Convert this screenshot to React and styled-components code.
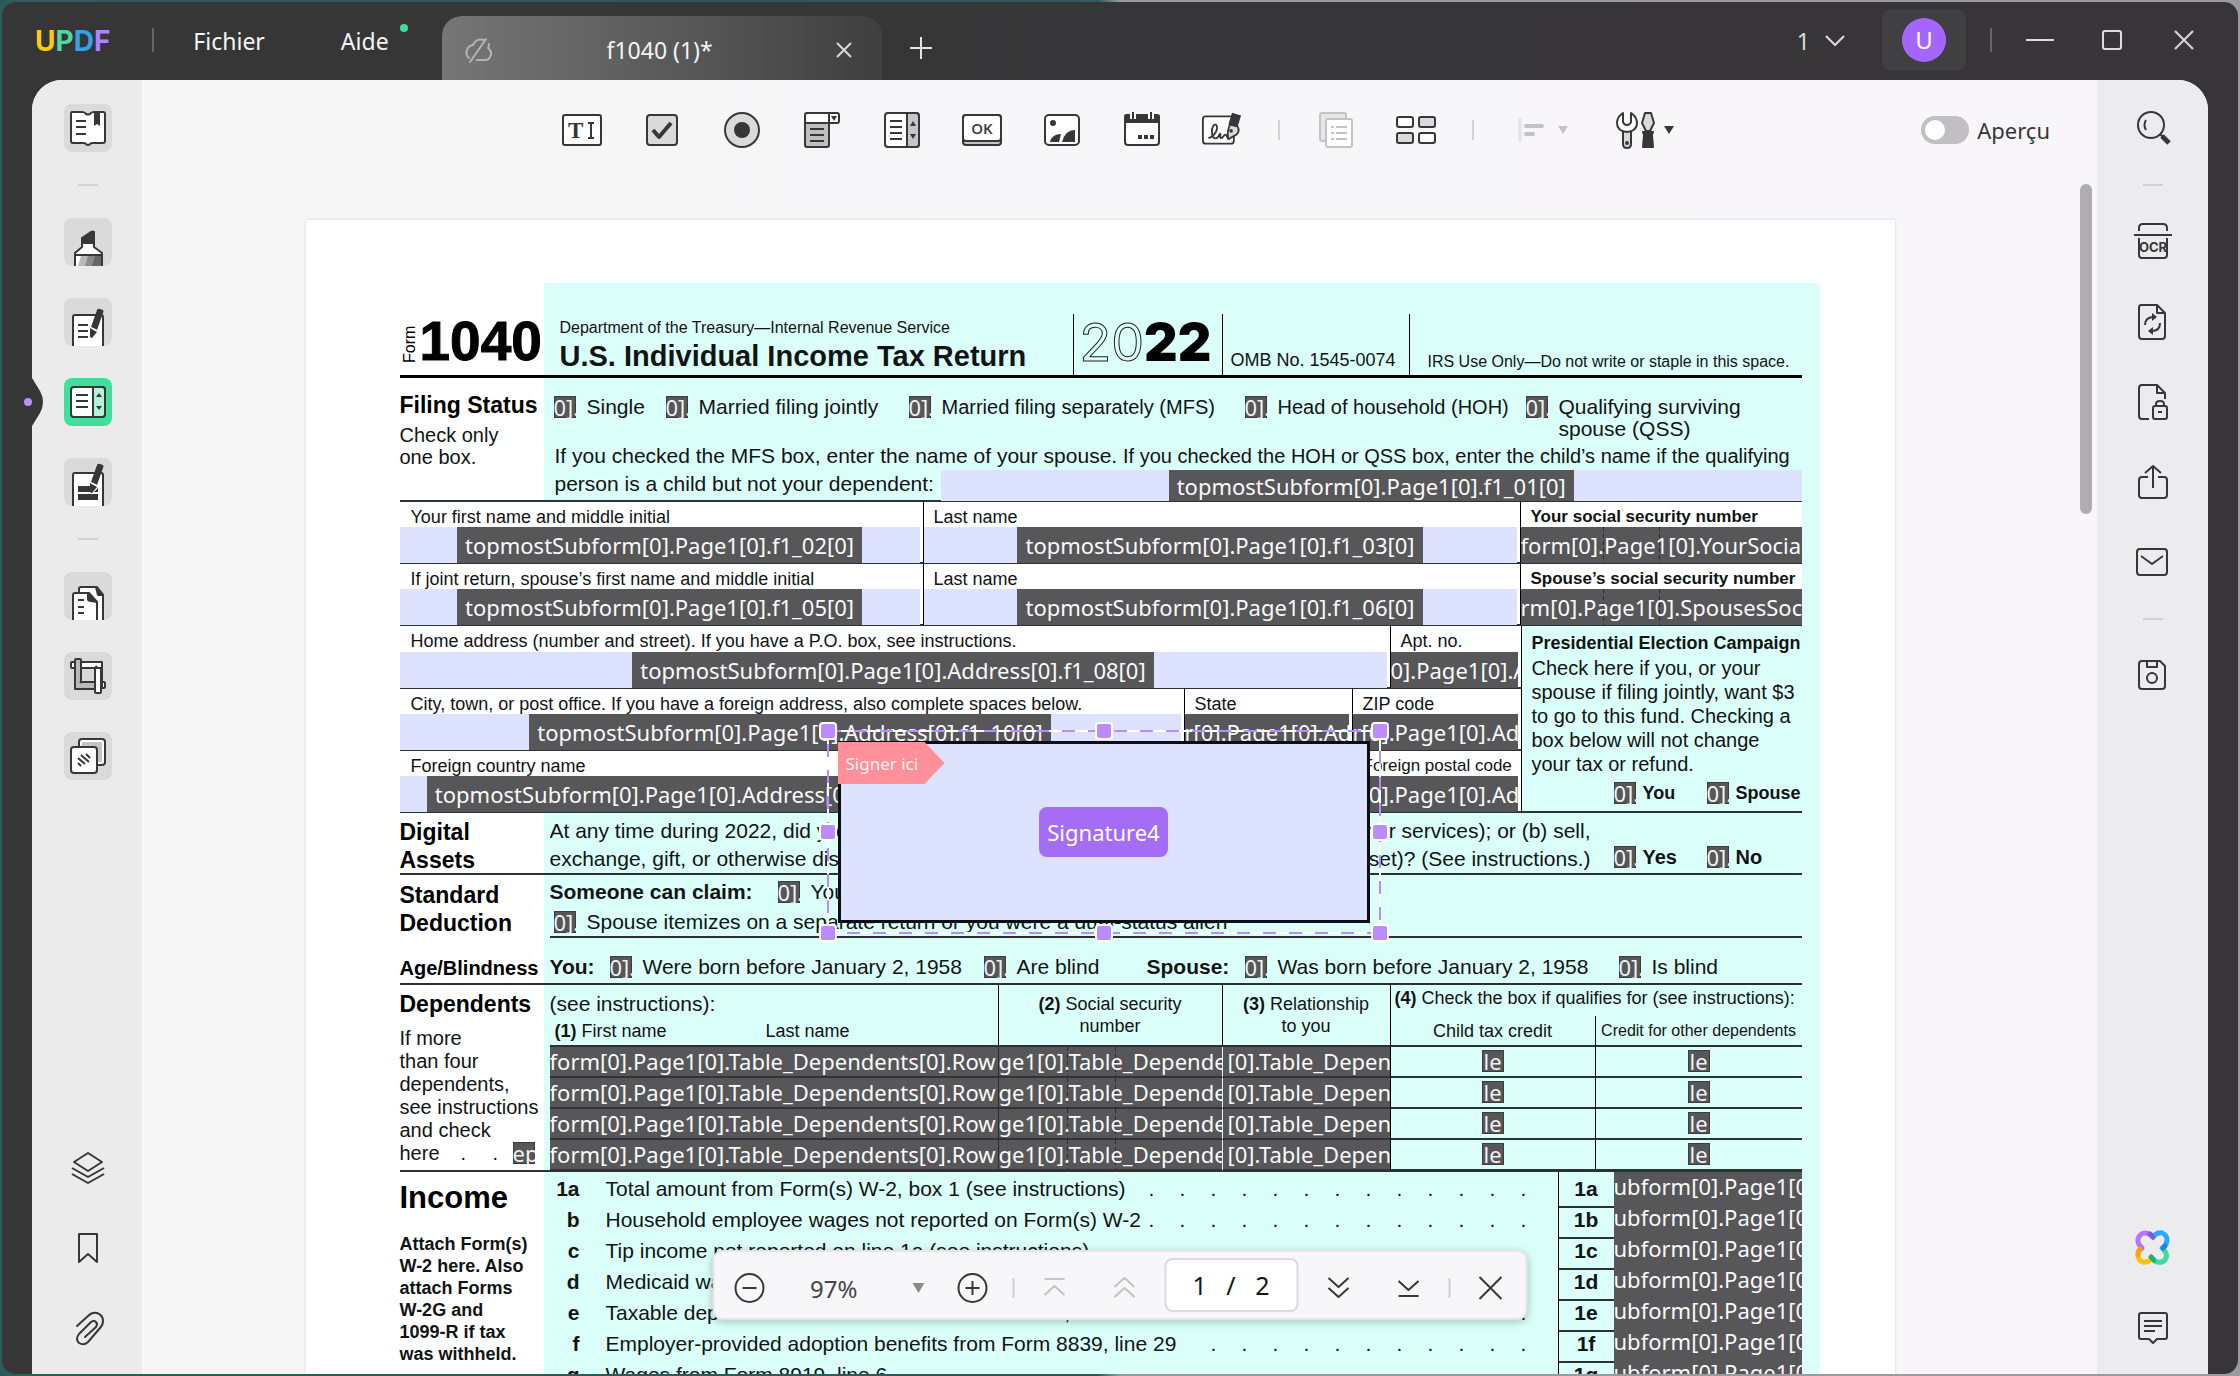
import React from 'react';
import styled, { createGlobalStyle, css } from 'styled-components';

const ui = '"Noto Sans", "Open Sans", sans-serif';
const doc = '"Liberation Sans", Arial, sans-serif';
const ink = '#373638';
const mint = '#dbfff9';
const tagBg = '#575659';
const lavender = '#dde2ff';
const rule = '2px solid #2a3333';
const upright = '1px solid #000';

const GlobalStyle = createGlobalStyle`
  *, *::before, *::after { box-sizing: border-box; }
  body { margin: 0; font-family: ${ui}; color: ${ink}; }
  button, input { font: inherit; color: inherit; }
  h1, h2, p { margin: 0; font: inherit; }
`;

/* ---------- window frame ---------- */

const Desktop = styled.div`
  height: 100vh;
  padding: 2px;
  background: linear-gradient(90deg, #2d5a5c 0 49%, #9b9b9d 50%);
`;

const Window = styled.div`
  height: 100%;
  display: flex;
  flex-direction: column;
  overflow: hidden;
  border-radius: 14px;
  background: linear-gradient(90deg, #363636, #373538);
`;

const TitleBar = styled.header`
  height: 78px;
  flex: none;
  display: flex;
  color: #f4f4f4;
  font-size: 23px;
`;

const Brand = styled.div`
  display: flex;
  align-items: center;
  padding: 0 42px 0 33px;
  font: 700 28px/76px Inter, sans-serif;
`;

const BrandLetter = styled.span`
  color: ${(p) => p.$tone};
`;

const BarDivider = styled.span`
  width: 2px;
  height: 24px;
  margin-top: 26px;
  background: #656565;
`;

const MenuBar = styled.nav`
  display: flex;
  gap: 66px;
  padding: 0 48px 0 34px;
`;

const plainButton = css`
  border: 0;
  padding: 0;
  background: none;
  display: flex;
  align-items: center;
  justify-content: center;
`;

const MenuButton = styled.button`
  ${plainButton}
  position: relative;
  height: 78px;
  padding-left: 5px;
  padding-right: 5px;
`;

const NewsDot = styled.span`
  position: absolute;
  top: 22px;
  right: -14px;
  width: 8px;
  height: 8px;
  border-radius: 50%;
  background: #3edc9b;
`;

const Tab = styled.div`
  display: grid;
  grid-template-columns: 26px 1fr 28px;
  align-items: center;
  width: 440px;
  height: 64px;
  margin-top: 14px;
  padding: 4px 24px 0 22px;
  border-radius: 20px 20px 0 0;
  background: linear-gradient(90deg, #767676, #3f3f3f);
  text-align: center;
`;

const GlyphButton = styled.button`
  ${plainButton}
  width: ${(p) => p.$w || 32}px;
  height: ${(p) => p.$h || 32}px;
`;

const NewTab = styled(GlyphButton)`
  margin: 30px 0 0 23px;
`;

const WindowTools = styled.div`
  display: flex;
  margin-left: auto;
  padding-right: 38px;
`;

const CountButton = styled.button`
  ${plainButton}
  gap: 14px;
  height: 78px;
  margin-right: 36px;
  color: #dcdcdc;
`;

const Account = styled.button`
  ${plainButton}
  width: 84px;
  height: 60px;
  margin: 8px 24px 0 0;
  border-radius: 8px;
  background: #403f42;
`;

const Avatar = styled.span`
  width: 44px;
  height: 44px;
  border-radius: 50%;
  background: #a565ff;
  color: #fff;
  font-size: 24px;
  line-height: 44px;
`;

const WindowButtons = styled.div`
  display: flex;
  align-items: center;
  gap: 40px;
  height: 76px;
  margin-left: 32px;
`;

/* ---------- work area ---------- */

const Workspace = styled.div`
  flex: 1;
  min-height: 0;
  display: grid;
  grid-template-columns: 110px minmax(0, 1fr) 111px;
  margin: 0 30px;
  border-radius: 30px 30px 0 0;
  background: linear-gradient(90deg, #f6f6f6, #f8f6fa);
`;

const Rail = styled.aside`
  position: relative;
  display: flex;
  flex-direction: column;
  align-items: center;
  gap: 32px;
  padding: ${(p) => (p.$side === 'left' ? '24px 0 22px 2px' : '24px 0 22px')};
  border-radius: ${(p) => (p.$side === 'left' ? '30px 0 0 0' : '0 30px 0 0')};
  background: ${(p) => (p.$side === 'left' ? '#ebebeb' : '#ecebed')};
`;

const RailButton = styled.button`
  ${plainButton}
  width: 48px;
  height: 48px;
  border-radius: 8px;
  overflow: hidden;
  background: ${(p) => (p.$active ? '#42df9c' : p.$filled ? '#dadadb' : 'transparent')};
`;

const RailRule = styled.span`
  width: 20px;
  height: 2px;
  background: #d2d2d2;
`;

const RailSpacer = styled.span`
  flex: 1;
`;

const Notch = styled.div`
  position: absolute;
  left: -8px;
  top: 298px;
  height: 48px;
`;

const Main = styled.main`
  position: relative;
  display: flex;
  flex-direction: column;
  min-width: 0;
  min-height: 0;
`;

const Toolbar = styled.div`
  flex: none;
  display: grid;
  grid-template-columns: 1fr auto 1fr;
  align-items: center;
  height: 100px;
  padding-right: 4px;
`;

const ToolGroup = styled.div`
  grid-column: 2;
  display: flex;
  align-items: center;
  gap: 40px;
`;

const ToolButton = styled.button`
  ${plainButton}
  width: ${(p) => p.$w || 40}px;
  height: 40px;
  gap: 8px;
  margin-left: ${(p) => (p.$w ? 8 : 0)}px;
`;

const ToolDivider = styled.span`
  width: 2px;
  height: 20px;
  margin: 0 -4px;
  background: #d3d2d4;
`;

const Preview = styled.label`
  justify-self: end;
  display: flex;
  align-items: center;
  gap: 8px;
  margin-right: 43px;
  font-size: 22px;
  line-height: 30px;
`;

const Switch = styled.input`
  appearance: none;
  width: 48px;
  height: 28px;
  margin: 0;
  padding: 4px;
  border-radius: 14px;
  background: #c1bfc3;
  &::before {
    content: '';
    display: block;
    width: 20px;
    height: 20px;
    border-radius: 50%;
    background: #fff;
  }
  &:checked {
    background: #a565ff;
  }
`;

const Canvas = styled.div`
  flex: 1;
  min-height: 0;
  display: grid;
  grid-template-columns: minmax(0, 1fr) 39px;
  overflow: hidden;
`;

const ScrollTrack = styled.div`
  padding: 4px 5px 0 22px;
`;

const ScrollThumb = styled.div`
  height: 330px;
  border-radius: 6px;
  background: #afadb1;
`;

/* ---------- tax form ---------- */

const Sheet = styled.article`
  position: relative;
  width: 1589px;
  margin: 40px auto 0;
  padding: 94px 93px 0 94px;
  background: linear-gradient(${mint}, ${mint}) 238px 63px / 1276px 100% no-repeat, #fff;
  box-shadow: 0 0 3px rgba(0, 0, 0, 0.14);
  color: #101414;
  font-family: ${doc};
  font-size: 21px;
  line-height: 22px;
  white-space: nowrap;
`;

const Masthead = styled.header`
  display: grid;
  grid-template-columns: 144px 529px 149px 187px 1fr;
  height: 64px;
  border-bottom: 3px solid #000;
`;

const FormNumber = styled.div`
  display: flex;
  align-items: flex-start;
  color: #000;
`;

const FormWord = styled.span`
  writing-mode: vertical-rl;
  transform: rotate(180deg);
  height: 49px;
  font-size: 16px;
  line-height: 20px;
`;

const BigNumber = styled.strong`
  font-size: 55px;
  line-height: 54px;
  -webkit-text-stroke: 1px #000;
`;

const TitleBlock = styled.div`
  padding: 4px 0 0 16px;
`;

const Agency = styled.p`
  font-size: 16px;
  line-height: 20px;
`;

const FormTitle = styled.h1`
  font-size: 29px;
  font-weight: 700;
  line-height: 36px;
`;

const YearBox = styled.div`
  padding-left: 6px;
  border-left: ${upright};
  font: 900 52px/58px Inter, sans-serif;
  color: #000;
`;

const YearOutline = styled.span`
  font-weight: 400;
  color: ${mint};
  -webkit-text-stroke: 1px #222;
`;

const HeadNote = styled.div`
  display: flex;
  align-items: flex-end;
  padding: 0 0 ${(p) => (p.$small ? 2 : 4)}px ${(p) => (p.$small ? 18 : 8)}px;
  border-left: ${upright};
  font-size: ${(p) => (p.$small ? 16 : 18)}px;
`;

const Section = styled.section`
  display: grid;
  grid-template-columns: 150px minmax(0, 1fr);
  height: ${(p) => p.$h}px;
  border-bottom: ${(p) => (p.$inset ? '0' : rule)};
`;

const Side = styled.div`
  padding-top: ${(p) => p.$top}px;
`;

const Heading = styled.h2`
  font-size: ${(p) => p.$size || 23}px;
  font-weight: 700;
  line-height: ${(p) => p.$lh || 28}px;
  color: #000;
`;

const SideNote = styled.p`
  margin-top: ${(p) => p.$gap}px;
  font-size: ${(p) => (p.$bold ? 18 : 20)}px;
  font-weight: ${(p) => (p.$bold ? 700 : 400)};
  line-height: ${(p) => p.$lh || 22}px;
`;

const Body = styled.div`
  padding-top: ${(p) => p.$top}px;
  border-bottom: ${(p) => (p.$ruled ? rule : '0')};
`;

const ChoiceGrid = styled.div`
  display: grid;
  grid-template-columns: ${(p) => p.$cols};
  padding-left: ${(p) => p.$pad || 0}px;
`;

const Choice = styled.label`
  display: flex;
  align-items: flex-start;
  gap: ${(p) => (p.$tight ? 7 : 11)}px;
  font-size: ${(p) => p.$size || 21}px;
  font-weight: ${(p) => (p.$tight ? 700 : 400)};
`;

const HiddenCheck = styled.input`
  appearance: none;
  position: absolute;
  width: 22px;
  height: 22px;
  margin: 0;
`;

const CheckFace = styled.span`
  flex: none;
  width: 22px;
  height: 22px;
  padding-left: ${(p) => p.$shift || 0}px;
  overflow: hidden;
  background: ${tagBg};
  box-shadow: inset 0 0 0 1px #3d3d40;
  color: #f2f2f2;
  font: 400 22px/22px ${ui};
`;

const Bold = styled.strong`
  font-weight: 700;
`;

const Compact = styled.span`
  font-size: 20px;
`;

const Paragraph = styled.p`
  padding-left: 5px;
  margin-top: 2px;
  line-height: 27px;
`;

const EntryLine = styled.div`
  display: flex;
  gap: 7px;
  height: 31px;
  padding-left: 5px;
  line-height: 27px;
`;

const Field = styled.div`
  flex: 1;
  display: flex;
  justify-content: ${(p) => (p.$fill ? 'stretch' : 'center')};
  height: ${(p) => p.$h || 35}px;
  margin-right: ${(p) => (p.$flush ? 0 : 3)}px;
  overflow: hidden;
  background: ${lavender};
`;

const ssnTicks = css`
  background:
    repeating-linear-gradient(#2c2c2e 0 4px, transparent 4px 7px) ${(p) => p.$ticks[0]}px 0 / 1px 100% no-repeat,
    repeating-linear-gradient(#2c2c2e 0 4px, transparent 4px 7px) ${(p) => p.$ticks[1]}px 0 / 1px 100% no-repeat,
    ${tagBg};
`;

const FieldName = styled.span`
  flex: ${(p) => (p.$fill ? '1' : 'none')};
  min-width: 0;
  padding: 0 ${(p) => (p.$fill ? 0 : 8)}px;
  overflow: hidden;
  background: ${tagBg};
  ${(p) => p.$ticks && ssnTicks}
  color: #fafafa;
  font: 400 22px/${(p) => p.$lh || 36}px ${ui};
`;

const NameRow = styled.div`
  display: grid;
  grid-template-columns: ${(p) => p.$cols};
  height: ${(p) => p.$h || 62}px;
  border-bottom: ${rule};
  background: #fff;
`;

const Cell = styled.div`
  display: flex;
  flex-direction: column;
  min-width: 0;
  padding-top: 4px;
  border-left: ${(p) => (p.$first ? '0' : upright)};
`;

const CellLabel = styled.span`
  flex: none;
  height: ${(p) => (p.$tall ? 22 : 21)}px;
  padding-left: ${(p) => (p.$first ? 11 : 10)}px;
  font-size: ${(p) => (p.$small || p.$bold ? 17 : 18)}px;
  font-weight: ${(p) => (p.$bold ? 700 : 400)};
`;

const AddressBlock = styled.section`
  display: grid;
  grid-template-columns: 1121px 1fr;
`;

const Campaign = styled.div`
  padding: 6px 0 0 10px;
  border-left: ${upright};
  border-bottom: ${rule};
`;

const CampaignTitle = styled.h2`
  font-size: 18px;
  font-weight: 700;
`;

const CampaignText = styled.p`
  margin: 2px 0 6px;
  font-size: 20px;
  line-height: 24px;
`;

const Split = styled.div`
  display: flex;
  width: 1041px;
  line-height: 28px;
`;

const SplitStart = styled.span`
  flex: 1;
  overflow: hidden;
`;

const AssetGrid = styled.div`
  display: grid;
  grid-template-columns: 1064px 1fr;
`;

const AssetChoices = styled(ChoiceGrid)`
  padding-top: 29px;
`;

const ClaimLine = styled.div`
  display: grid;
  grid-template-columns: 228px 1fr;
  height: 30px;
`;

const DependentsTable = styled.table`
  width: 100%;
  border-collapse: separate;
  border-spacing: 0;
  table-layout: fixed;
  font-size: 18px;
`;

const HeadCell = styled.th`
  height: ${(p) => p.$h || 31}px;
  padding: ${(p) => p.$pad || '0'};
  vertical-align: top;
  border-left: ${(p) => (p.$first ? '0' : upright)};
  border-bottom: ${(p) => (p.$ruled ? rule : '0')};
  text-align: ${(p) => p.$align || 'center'};
  font-size: ${(p) => p.$size || 18}px;
  font-weight: 400;
`;

const SeeNote = styled.span`
  display: block;
  margin-bottom: 5px;
  font-size: 21px;
`;

const NamePair = styled.span`
  display: grid;
  grid-template-columns: 211px 1fr;
  padding-left: 5px;
`;

const FillCell = styled.td`
  height: 31px;
  padding: 0 0 0 ${(p) => (p.$white ? 5 : 0)}px;
  overflow: hidden;
  background: ${tagBg};
  ${(p) => p.$ticks && ssnTicks}
  border-left: ${(p) => (p.$first ? '0' : p.$white ? '1px solid #eee' : '1px solid #2c2c2e')};
  border-bottom: 2px solid #333236;
  color: #fafafa;
  font: 400 22px/29px ${ui};
`;

const CheckCell = styled.td`
  height: 31px;
  padding: 3px 0 0;
  vertical-align: top;
  border-left: ${upright};
  border-bottom: ${rule};
`;

const CenterChoice = styled.label`
  display: flex;
  justify-content: center;
`;

const HereLine = styled.div`
  display: grid;
  grid-template-columns: 61px 32px 20px 1fr;
  font-size: 20px;
  line-height: 23px;
`;

const IncomeGrid = styled.section`
  display: grid;
  grid-template-columns: 150px 1fr;
`;

const IncomeRow = styled.div`
  display: grid;
  grid-template-columns: 30px 978px 56px 1fr;
  height: 31px;
  line-height: 34px;
`;

const LineNo = styled.strong`
  text-align: right;
`;

const LineText = styled.div`
  display: flex;
  padding: 0 31px 0 26px;
`;

const Dots = styled.span`
  display: flex;
  gap: 25px;
  margin-left: auto;
`;

const Dot = styled.span`
  width: 6px;
`;

const LineBox = styled.strong`
  border-left: ${upright};
  border-bottom: ${rule};
  text-align: center;
`;

const AmountField = styled.span`
  overflow: hidden;
  border-bottom: 2px solid #333236;
  background: ${tagBg};
  color: #fafafa;
  font: 400 22px/29px ${ui};
`;

/* ---------- signature object ---------- */

const Selection = styled.div`
  position: absolute;
  left: 522px;
  top: 511px;
  width: 552px;
  height: 202px;
`;

const Marquee = styled.svg`
  position: absolute;
  inset: 0;
  overflow: visible;
`;

const Handle = styled.span`
  position: absolute;
  left: ${(p) => p.$x};
  top: ${(p) => p.$y};
  width: 18px;
  height: 18px;
  margin: -9px;
  border: 2px solid #fff;
  border-radius: 4px;
  background: #ba8cff;
`;

const SignatureBox = styled.div`
  position: absolute;
  inset: 10px;
  display: flex;
  align-items: center;
  justify-content: center;
  border: 3px solid #0d0e12;
  background: ${lavender};
  font-family: ${ui};
`;

const SignFlag = styled.span`
  position: absolute;
  left: -3px;
  top: -2px;
  width: 107px;
  height: 42px;
  padding-left: 8px;
  background: #ff8f98;
  clip-path: polygon(0 0, 87px 0, 100% 50%, 87px 100%, 0 100%);
  color: #fff4f2;
  font-size: 17px;
  line-height: 43px;
`;

const SignatureName = styled.button`
  height: 50px;
  padding: 0 8px;
  border: 0;
  border-radius: 8px;
  background: #a56cf6;
  color: #fff;
  font-size: 22px;
`;

/* ---------- floating pager ---------- */

const Pager = styled.div`
  position: absolute;
  left: 50%;
  bottom: 54px;
  transform: translateX(-50%);
  display: flex;
  align-items: center;
  gap: 24px;
  height: 70px;
  padding: 6px 19px 0;
  border: 2px solid #e6e4e8;
  border-radius: 10px;
  background: #f7f6f9;
  box-shadow: 0 2px 8px rgba(0, 0, 0, 0.24);
`;

const ZoomLevel = styled.button`
  ${plainButton}
  justify-content: space-between;
  width: 114px;
  margin: 0 8px 0 21px;
  font-size: 24px;
  color: #454446;
`;

const PagerPair = styled.div`
  display: flex;
  gap: 38px;
`;

const PagerRule = styled.span`
  width: 2px;
  height: 20px;
  background: #cfced1;
`;

const PageInput = styled.input`
  align-self: flex-start;
  width: 134px;
  height: 54px;
  padding: 0;
  border: 2px solid #dcdadf;
  border-radius: 8px;
  background: #fff;
  color: #161616;
  font-size: 25px;
  text-align: center;
`;

/* ---------- icons ---------- */

const Icon = ({ s = 48, w, h, children, stroke = ink, sw = 2, ...rest }) => (
  <svg width={w || s} height={h || s} viewBox={`0 0 ${w || s} ${h || s}`} fill="none" stroke={stroke}
    strokeWidth={sw} strokeLinejoin="round" aria-hidden="true" {...rest}>
    {children}
  </svg>
);

const Caret = ({ color = ink, size = 10 }) => (
  <Icon w={size} h={size} stroke="none"><path fill={color} d={`M0 1H${size}L${size / 2} ${size - 1}Z`} /></Icon>
);

const Pencil = ({ y = 0 }) => (
  <g transform={`translate(0 ${y})`} stroke="none" fill={ink}>
    <path d="M33 12q1-2 3-1l3 1q1 1 0 3l-6 17-6-3z" />
    <path d="M26 30l7 4-5 6q-2 0-2-2z" />
    <path d="M26 29l8 4" stroke="#fff" strokeWidth="1" />
  </g>
);

const ReaderIcon = () => (
  <Icon>
    <path fill="#fff" d="M8 8h10q3 0 4 2 2 1 4 0 1-2 4-2h9q2 0 2 2v27q0 2-2 2h-10q-2 0-3 1-2 2-4 0-1-1-3-1H9q-2 0-2-2V10q0-2 1-2z" />
    <path d="M12 17h10M12 23h10M12 30h10" />
    <path fill={ink} stroke="none" d="M30 8h6v14l-3-2-3 2z" />
  </Icon>
);

const MarkerIcon = () => (
  <Icon>
    <path fill="#fff" d="M18 25h12v4l8 6v16H11V35l7-6z" />
    <path fill={ink} d="M18 25v-5l9-6q2-1 3 0v11z" />
    <path stroke="none" fill="#8b8b8b" d="M18 38h20v10H15z" />
    <path stroke="none" fill="#b9b9b9" d="M17 38h7l-3 10h-7z" />
    <path stroke="none" fill="#666" d="M31 38h6v10h-9z" />
    <path d="M11 37h27v14M11 37v14" />
  </Icon>
);

const EditIcon = () => (
  <Icon>
    <rect x="9" y="17" width="30" height="36" rx="2" fill="#fff" />
    <path d="M14 27h10M14 33h10M14 39h10" />
    <Pencil />
  </Icon>
);

const FormIcon = () => (
  <Icon>
    <rect x="7" y="9" width="34" height="30" rx="3" fill="#fff" />
    <path fill="#b4f3d7" d="M29 9h9q3 0 3 3v24q0 3-3 3h-9z" />
    <path d="M12 17h12M12 23h12M12 29h12" />
    <path stroke="none" fill={ink} d="M32 19l3-4 3 4zM32 28h6l-3 4z" />
  </Icon>
);

const RedactIcon = () => (
  <Icon>
    <rect x="9" y="15" width="30" height="36" rx="2" fill="#fff" />
    <path stroke="none" fill={ink} d="M14 28h20v6H14zM14 36h20v6H14z" />
    <path stroke="none" fill="#fff" d="M26 28l8-4v6l-5 5z" />
    <Pencil y={-5} />
  </Icon>
);

const PagesIcon = () => (
  <Icon>
    <path fill="#fff" d="M15 51V17q0-2 2-2h16l6 8v28" />
    <path fill={ink} d="M32 15l7 8h-5z" />
    <path fill="#fff" d="M9 51V23q0-2 2-2h14l8 9v21" />
    <path fill={ink} d="M24 21v6q0 2 3 2l6 1z" />
    <path d="M14 28h6M14 35h6M14 41h6" />
  </Icon>
);

const CropIcon = () => (
  <Icon>
    <path fill="#fff" d="M8 10h4v6H8q-1 0-1-1v-4q0-1 1-1zM37 30h3q1 0 1 1v4q0 1-1 1h-3z" />
    <path fill="#fff" d="M16 10h22v26h-6q-1 0-1 0V16H16z" />
    <path fill="#b9b9b9" d="M11 8q0-1 1-1h4q1 0 1 1v22h14v7H11z" />
    <path fill="#fff" d="M31 16h6v24q0 1-1 1h-4q-1 0-1-1z" />
    <path d="M17 16h14M16 31l2-2M31 16l2-2" />
  </Icon>
);

const StampIcon = () => (
  <Icon>
    <rect x="15" y="7" width="26" height="26" rx="3" fill="#fff" />
    <rect x="18" y="10" width="20" height="20" fill="#c4c4c4" stroke="none" />
    <rect x="7" y="15" width="26" height="26" rx="3" fill="#fff" />
    <path d="M14 26l7 6M14 31l3 3M17 23l8 7M22 22l4 4" />
  </Icon>
);

const LayersIcon = () => (
  <Icon><path d="M24 9l14 9-14 9-14-9zM8 24l16 9 16-9M8 30l16 9 16-9" /></Icon>
);

const BookmarkIcon = () => (
  <Icon><path d="M15 10h18v28l-9-8-9 8z" /></Icon>
);

const ClipIcon = () => (
  <Icon strokeLinecap="round"><path d="M13 22l11-10q4-4 9-3 6 2 6 8 0 4-3 7L24 38q-4 4-9 1-4-4 0-9l12-12q3-2 5 0t0 5L21 33" /></Icon>
);

const SearchIcon = () => (
  <Icon>
    <circle cx="22" cy="21" r="13" />
    <path d="M17 16q-3 5 0 10" />
    <path d="M31 30l3 3" />
    <path strokeWidth="5" d="M33 32l7 7" />
  </Icon>
);

const OcrLabel = styled.text`
  font: 700 13px Inter, sans-serif;
  fill: ${ink};
  stroke: none;
`;

const OcrIcon = () => (
  <Icon>
    <path d="M10 13V10q0-4 4-4h20q4 0 4 4v3M5 17h38M10 20v17q0 3 3 3h22q3 0 3-3V20" />
    <OcrLabel x="24" y="34" textAnchor="middle">OCR</OcrLabel>
  </Icon>
);

const ConvertIcon = () => (
  <Icon>
    <path d="M12 7h16l8 8v23q0 3-3 3H13q-3 0-3-3V10q0-3 2-3zM28 7v8h8" />
    <path d="M16 27q0-8 9-8M31 25q0 8-8 8" />
    <path fill={ink} stroke="none" d="M23 15l5 4-5 4zM24 29l-5 4 5 4z" />
  </Icon>
);

const LockIcon = () => (
  <Icon>
    <path d="M20 41h-7q-3 0-3-3V10q0-3 3-3h15l8 8v6M28 7v8h8" />
    <rect x="24" y="28" width="14" height="13" rx="2" />
    <path d="M27 28v-2q0-3 4-3t4 3v2M29 34h4" />
  </Icon>
);

const ShareIcon = () => (
  <Icon><path d="M19 19h-6q-3 0-3 3v15q0 3 3 3h22q3 0 3-3V22q0-3-3-3h-6M24 30V9M16 15l8-7 8 7" /></Icon>
);

const MailIcon = () => (
  <Icon><rect x="8" y="11" width="30" height="26" rx="3" /><path d="M12 18l11 8 11-8" /></Icon>
);

const SaveIcon = () => (
  <Icon>
    <path d="M13 9h18l5 5v20q0 3-3 3H13q-3 0-3-3V12q0-3 3-3zM18 9v6h10V9" />
    <circle cx="23" cy="26" r="5" />
  </Icon>
);

const AiIcon = () => (
  <Icon sw={5} strokeLinecap="round">
    <path stroke="#29a9ff" d="M24 13q4-5 9-4 5 2 5 7 0 4-4 8" />
    <path stroke="#3cdc9a" d="M33 24q6 5 4 10-2 5-8 4-3 0-7-4" />
    <path stroke="#ffc400" d="M23 34q-4 5-9 4-5-2-5-7 0-3 4-7" />
    <path stroke="#b277ff" d="M13 24q-5-5-4-9 2-6 7-6 4 0 8 4" />
    <path stroke="#ff9f1c" d="M9 31q0-4 2-6" />
    <path stroke="#7f5be0" d="M21 10l3 3" />
    <path stroke="#1b84e8" d="M36 22l-2 2" />
    <path stroke="#1fae77" d="M25 36l-3-3" />
  </Icon>
);

const CommentIcon = () => (
  <Icon><path d="M12 9h24q2 0 2 2v22q0 2-2 2h-8l-4 4-4-4h-8q-2 0-2-2V11q0-2 2-2zM15 17h18M15 22h18M15 27h11" /></Icon>
);

const SerifGlyph = styled.text`
  font: 700 23px "Liberation Serif", serif;
  fill: ${ink};
  stroke: none;
`;

const SansGlyph = styled.text`
  font: 600 15px "Open Sans", sans-serif;
  fill: ${ink};
  stroke: none;
`;

const TextFieldIcon = () => (
  <Icon s={40}>
    <rect x="1" y="5" width="38" height="30" rx="2" fill="#fff" />
    <SerifGlyph x="6" y="28">T</SerifGlyph>
    <path d="M29 13v14M26 13h6M26 28h6" />
  </Icon>
);

const CheckBoxIcon = () => (
  <Icon s={40}>
    <rect x="5" y="5" width="30" height="30" rx="3" fill="#dadada" />
    <path strokeWidth="4" d="M11 20l6 7 12-14" />
  </Icon>
);

const RadioIcon = () => (
  <Icon s={40}>
    <circle cx="20" cy="20" r="17" fill="#dadada" />
    <circle cx="20" cy="20" r="8" fill={ink} stroke="none" />
  </Icon>
);

const ComboIcon = () => (
  <Icon s={40}>
    <path fill="#bfbfbf" d="M3 12h24v23q0 2-2 2H5q-2 0-2-2z" />
    <rect x="3" y="3" width="34" height="10" rx="2" fill="#fff" />
    <path d="M27 3v10M8 19h14M8 25h14M8 31h14" />
    <path fill={ink} stroke="none" d="M29 6h6l-3 5z" />
  </Icon>
);

const ListIcon = () => (
  <Icon s={40}>
    <rect x="3" y="3" width="34" height="34" rx="3" fill="#fff" />
    <path fill="#c6c6c6" d="M25 3h9q3 0 3 3v28q0 3-3 3h-9z" />
    <path d="M8 11h12M8 17h12M8 23h12M8 29h12" />
    <path fill={ink} stroke="none" d="M28 16l3-5 3 5zM28 24h6l-3 5z" />
  </Icon>
);

const ButtonIcon = () => (
  <Icon s={40}>
    <rect x="1" y="5" width="38" height="30" rx="3" fill="#c6c6c6" />
    <rect x="1" y="5" width="38" height="26" rx="3" fill="#fff" />
    <SansGlyph x="20" y="24" textAnchor="middle">OK</SansGlyph>
  </Icon>
);

const ImageIcon = () => (
  <Icon s={40}>
    <rect x="3" y="5" width="34" height="30" rx="4" fill="#fff" />
    <circle cx="11" cy="13" r="3" fill={ink} stroke="none" />
    <path fill={ink} stroke="none" d="M8 32q2-8 11-8l-2 8zM20 32q3-12 13-12v12z" />
  </Icon>
);

const DateIcon = () => (
  <Icon s={40}>
    <rect x="3" y="5" width="34" height="30" rx="3" fill="#fff" />
    <path fill={ink} d="M3 12V7q0-2 2-2h30q2 0 2 2v5z" />
    <path stroke="#fff" strokeWidth="6" d="M11 2v7M29 2v7" />
    <path d="M11 2v7M29 2v7" />
    <path strokeWidth="4" d="M16 27h4M22 27h4M28 27h4" />
  </Icon>
);

const SignIcon = () => (
  <Icon w={44} h={40}>
    <rect x="1" y="5" width="34" height="30" rx="3" fill="#fff" />
    <path d="M7 29c7-2 11-10 9-14-2-3-6 2-5 8 0 4 2 7 5 6s3-5 4-5-1 5 1 5 3-4 5-4 0 4 4 4" />
    <path fill="#dadada" d="M31 14l8 2q3 5-1 9l-9 5q-2-9 2-16z" />
    <path fill={ink} stroke="none" d="M33 1l10 3-4 13-10-3z" />
    <circle cx="32" cy="21" r="2" fill={ink} stroke="none" />
  </Icon>
);

const CopiesIcon = () => (
  <Icon s={40} stroke="#c3c3c5">
    <rect x="4" y="3" width="26" height="28" rx="2" fill="#e6e6e8" />
    <rect x="10" y="9" width="26" height="28" rx="2" fill="#fff" />
    <path d="M15 17h3M20 17h11M15 23h3M20 23h11M15 29h3M20 29h11" />
  </Icon>
);

const GridIcon = () => (
  <Icon s={40}>
    <rect x="1" y="7" width="16" height="10" rx="2" fill="#fff" />
    <rect x="23" y="7" width="16" height="10" rx="2" fill="#dadadc" />
    <rect x="1" y="23" width="16" height="10" rx="2" fill="#dadadc" />
    <rect x="23" y="23" width="16" height="10" rx="2" fill="#fff" />
  </Icon>
);

const AlignIcon = () => (
  <Icon w={32} h={40} stroke="#c3c2c5" sw={4} strokeLinecap="round">
    <path stroke="#e6e5e8" d="M2 10v20" />
    <path d="M8 16h16M8 24h7" />
  </Icon>
);

const ToolsIcon = () => (
  <Icon s={40}>
    <path fill="#dadadc" d="M7 21h8v13q0 4-4 4t-4-4z" />
    <path fill="#fff" d="M7 3q-6 4-6 10 0 8 10 9 10-1 10-9 0-6-6-10v9q-1 3-4 3t-4-3z" />
    <circle cx="11" cy="33" r="1" />
    <path fill="#dadadc" d="M29 3h6l3 10-4 8h-4l-4-8z" />
    <path fill={ink} d="M27 22h10l-1 3 1 12h-10l1-12z" />
  </Icon>
);

const CloudOffIcon = () => (
  <Icon w={30} h={28} stroke="#b4b4b4" strokeLinecap="round">
    <path d="M5 22q-4-3-2-8 1-4 6-5 3-7 11-5M25 8q0 3-1 4 5 4 2 9-1 3-5 3h-8M22 3L6 26" />
  </Icon>
);

const CrossIcon = ({ size = 22, color = '#d8d8d8' }) => (
  <Icon s={size} stroke={color}><path d={`M2 2L${size - 2} ${size - 2}M${size - 2} 2L2 ${size - 2}`} /></Icon>
);

const StrokeIcon = ({ d, w = 32, h = 32, color = ink }) => (
  <Icon w={w} h={h} stroke={color}><path d={d} /></Icon>
);

/* ---------- pieces ---------- */

const Check = ({ children, label, text = '0].', tight, size }) => (
  <Choice $tight={tight} $size={size}>
    <HiddenCheck type="checkbox" aria-label={label} />
    <CheckFace>{text}</CheckFace>
    {children}
  </Choice>
);

const Entry = ({ label, name, first, fill, bold, ticks, tall, small }) => (
  <Cell $first={first}>
    <CellLabel $first={first} $bold={bold} $tall={tall} $small={small}>{label}</CellLabel>
    <Field $fill={fill} $flush={bold}>
      <FieldName $fill={fill} $ticks={ticks}>{name}</FieldName>
    </Field>
  </Cell>
);

const leftTools = [
  ['Lecteur', ReaderIcon], null, ['Commenter', MarkerIcon], ['Modifier', EditIcon], ['Formulaire', FormIcon],
  ['Caviarder', RedactIcon], null, ['Pages', PagesIcon], ['Recadrer', CropIcon], ['Filigrane', StampIcon],
];
const leftBottom = [['Calques', LayersIcon], ['Signets', BookmarkIcon], ['Fichiers joints', ClipIcon]];
const rightTools = [
  ['Rechercher', SearchIcon], null, ['OCR', OcrIcon], ['Convertir', ConvertIcon], ['Protéger', LockIcon],
  ['Partager', ShareIcon], ['Envoyer', MailIcon], null, ['Enregistrer', SaveIcon],
];
const rightBottom = [['Assistant', AiIcon], ['Notes', CommentIcon]];
const formTools = [
  ['Champ de texte', TextFieldIcon], ['Case à cocher', CheckBoxIcon], ['Bouton radio', RadioIcon],
  ['Liste déroulante', ComboIcon], ['Zone de liste', ListIcon], ['Bouton', ButtonIcon], ['Image', ImageIcon],
  ['Date', DateIcon], ['Signature', SignIcon],
];

const RailItems = ({ items, filled }) =>
  items.map((item, i) => {
    if (!item) return <RailRule key={i} />;
    const [label, Glyph] = item;
    return (
      <RailButton key={i} aria-label={label} $filled={filled} $active={label === 'Formulaire'}>
        <Glyph />
      </RailButton>
    );
  });

const incomeLines = [
  ['1a', '1a', 'Total amount from Form(s) W-2, box 1 (see instructions)', 13],
  ['b', '1b', 'Household employee wages not reported on Form(s) W-2', 13],
  ['c', '1c', 'Tip income not reported on line 1a (see instructions)', 12],
  ['d', '1d', 'Medicaid waiver payments not reported on Form(s) W-2', 9],
  ['e', '1e', 'Taxable dependent care benefits from Form 2441, line 26', 9],
  ['f', '1f', 'Employer-provided adoption benefits from Form 8839, line 29', 11],
  ['g', '1g', 'Wages from Form 8919, line 6', 0],
];

const handles = [
  ['0%', '0%'], ['50%', '0%'], ['100%', '0%'], ['0%', '50%'], ['100%', '50%'], ['0%', '100%'], ['50%', '100%'], ['100%', '100%'],
];

const TaxForm = () => (
  <Sheet>
    <Masthead>
      <FormNumber>
        <FormWord>Form</FormWord>
        <BigNumber>1040</BigNumber>
      </FormNumber>
      <TitleBlock>
        <Agency>Department of the Treasury—Internal Revenue Service</Agency>
        <FormTitle>U.S. Individual Income Tax Return</FormTitle>
      </TitleBlock>
      <YearBox><YearOutline>20</YearOutline>22</YearBox>
      <HeadNote>OMB No. 1545-0074</HeadNote>
      <HeadNote $small>IRS Use Only—Do not write or staple in this space.</HeadNote>
    </Masthead>

    <Section $h={124}>
      <Side $top={13}>
        <Heading>Filing Status</Heading>
        <SideNote $gap={5}>Check only<br />one box.</SideNote>
      </Side>
      <Body $top={18}>
        <ChoiceGrid $cols="112px 243px 336px 281px 1fr" $pad={4}>
          <Check>Single</Check>
          <Check>Married filing jointly</Check>
          <Check size={20}>Married filing separately (MFS)</Check>
          <Check size={20}>Head of household (HOH)</Check>
          <Check><span>Qualifying surviving<br />spouse (QSS)</span></Check>
        </ChoiceGrid>
        <Paragraph>
          If you checked the MFS box, enter the name of your spouse.{' '}
          <Compact>If you checked the HOH or QSS box, enter the child’s name if the qualifying</Compact>
        </Paragraph>
        <EntryLine>
          <span>person is a child but not your dependent:</span>
          <Field $h={31} $flush><FieldName $lh={33}>topmostSubform[0].Page1[0].f1_01[0]</FieldName></Field>
        </EntryLine>
      </Body>
    </Section>

    <NameRow $cols="523px 597px 1fr">
      <Entry first label="Your first name and middle initial" name="topmostSubform[0].Page1[0].f1_02[0]" />
      <Entry label="Last name" name="topmostSubform[0].Page1[0].f1_03[0]" />
      <Entry bold fill ticks={[82, 138]} label="Your social security number" name="form[0].Page1[0].YourSocial[0]" />
    </NameRow>
    <NameRow $cols="523px 597px 1fr">
      <Entry first label="If joint return, spouse’s first name and middle initial" name="topmostSubform[0].Page1[0].f1_05[0]" />
      <Entry label="Last name" name="topmostSubform[0].Page1[0].f1_06[0]" />
      <Entry bold fill ticks={[82, 138]} label="Spouse’s social security number" name="rm[0].Page1[0].SpousesSocial[0]" />
    </NameRow>

    <AddressBlock>
      <div>
        <NameRow $cols="990px 1fr" $h={63}>
          <Entry first tall label="Home address (number and street). If you have a P.O. box, see instructions." name="topmostSubform[0].Page1[0].Address[0].f1_08[0]" />
          <Entry fill tall label="Apt. no." name="0].Page1[0].Address[0]" />
        </NameRow>
        <NameRow $cols="784px 168px 1fr">
          <Entry first label="City, town, or post office. If you have a foreign address, also complete spaces below." name="topmostSubform[0].Page1[0].Address[0].f1_10[0]" />
          <Entry fill label="State" name="r[0].Page1[0].Address[0]" />
          <Entry fill label="ZIP code" name="r[0].Page1[0].Address[0]" />
        </NameRow>
        <NameRow $cols="579px 373px 1fr">
          <Entry first label="Foreign country name" name="topmostSubform[0].Page1[0].Address[0].f1_13[0]" />
          <Entry fill label="Foreign province/state/county" name="topmostSubform[0].Page1[0]" />
          <Entry fill small label="Foreign postal code" name="r[0].Page1[0].Address[0]" />
        </NameRow>
      </div>
      <Campaign>
        <CampaignTitle>Presidential Election Campaign</CampaignTitle>
        <CampaignText>
          Check here if you, or your<br />spouse if filing jointly, want $3<br />to go to this fund. Checking a<br />box below will not change<br />your tax or refund.
        </CampaignText>
        <ChoiceGrid $cols="93px 1fr" $pad={82}>
          <Check tight size={18}>You</Check>
          <Check tight size={18}>Spouse</Check>
        </ChoiceGrid>
      </Campaign>
    </AddressBlock>

    <Section $h={62}>
      <Side $top={5}><Heading>Digital<br />Assets</Heading></Side>
      <Body $top={4}>
        <AssetGrid>
          <div>
            <Split>
              <SplitStart>At any time during 2022, did you: (a) receive (as a reward, award, or</SplitStart>
              <span>payment for property or services); or (b) sell,</span>
            </Split>
            <Split>
              <SplitStart>exchange, gift, or otherwise dispose of a digital asset (or a financial</SplitStart>
              <span>interest in a digital asset)? (See instructions.)</span>
            </Split>
          </div>
          <AssetChoices $cols="93px 1fr">
            <Check tight size={20}>Yes</Check>
            <Check tight size={20}>No</Check>
          </AssetChoices>
        </AssetGrid>
      </Body>
    </Section>

    <Section $h={63} $inset>
      <Side $top={6}><Heading>Standard<br />Deduction</Heading></Side>
      <Body $top={6} $ruled>
        <ClaimLine>
          <Bold>Someone can claim:</Bold>
          <Check>You as a dependent</Check>
        </ClaimLine>
        <ChoiceGrid $cols="1fr" $pad={4}>
          <Check>Spouse itemizes on a separate return or you were a dual-status alien</Check>
        </ChoiceGrid>
      </Body>
    </Section>

    <Section $h={47}>
      <Side $top={16}><Heading $size={20}>Age/Blindness</Heading></Side>
      <Body $top={18}>
        <ChoiceGrid $cols="60px 374px 163px 98px 374px 1fr">
          <Bold>You:</Bold>
          <Check>Were born before January 2, 1958</Check>
          <Check>Are blind</Check>
          <Bold>Spouse:</Bold>
          <Check>Was born before January 2, 1958</Check>
          <Check>Is blind</Check>
        </ChoiceGrid>
      </Body>
    </Section>

    <Section $h={187}>
      <Side $top={5}>
        <Heading>Dependents</Heading>
        <SideNote $gap={9} $lh={23}>If more<br />than four<br />dependents,<br />see instructions<br />and check</SideNote>
        <HereLine>
          <span>here</span><span>.</span><span>.</span>
          <Check label="More than four dependents" text="ep" />
        </HereLine>
      </Side>
      <DependentsTable>
        <colgroup>
          <col width="448" /><col width="224" /><col width="168" /><col width="205" /><col width="207" />
        </colgroup>
        <thead>
          <tr>
            <HeadCell rowSpan={2} $first $ruled $align="left" $pad="8px 0 0 0">
              <SeeNote>(see instructions):</SeeNote>
              <NamePair><span><Bold>(1)</Bold> First name</span><span>Last name</span></NamePair>
            </HeadCell>
            <HeadCell rowSpan={2} $ruled $pad="8px 0 0 0"><Bold>(2)</Bold> Social security<br />number</HeadCell>
            <HeadCell rowSpan={2} $ruled $pad="8px 0 0 0"><Bold>(3)</Bold> Relationship<br />to you</HeadCell>
            <HeadCell colSpan={2} $align="left" $pad="2px 0 0 4px"><Bold>(4)</Bold> Check the box if qualifies for (see instructions):</HeadCell>
          </tr>
          <tr>
            <HeadCell $ruled $pad="4px 0 0 0">Child tax credit</HeadCell>
            <HeadCell $ruled $size={16} $pad="4px 0 0 0">Credit for other dependents</HeadCell>
          </tr>
        </thead>
        <tbody>
          {[1, 2, 3, 4].map((n) => (
            <tr key={n}>
              <FillCell $first>form[0].Page1[0].Table_Dependents[0].Row</FillCell>
              <FillCell $ticks={[68, 116]}>ge1[0].Table_Dependents[0]</FillCell>
              <FillCell $white>[0].Table_Dependents</FillCell>
              <CheckCell>
                <CenterChoice><HiddenCheck type="checkbox" aria-label={`Child tax credit ${n}`} /><CheckFace $shift={2}>le</CheckFace></CenterChoice>
              </CheckCell>
              <CheckCell>
                <CenterChoice><HiddenCheck type="checkbox" aria-label={`Credit for other dependents ${n}`} /><CheckFace $shift={2}>le</CheckFace></CenterChoice>
              </CheckCell>
            </tr>
          ))}
        </tbody>
      </DependentsTable>
    </Section>

    <IncomeGrid>
      <Side $top={8}>
        <Heading $size={31} $lh={36}>Income</Heading>
        <SideNote $bold $gap={17}>
          Attach Form(s)<br />W-2 here. Also<br />attach Forms<br />W-2G and<br />1099-R if tax<br />was withheld.
        </SideNote>
      </Side>
      <div>
        {incomeLines.map(([no, box, text, dots]) => (
          <IncomeRow key={box}>
            <LineNo>{no}</LineNo>
            <LineText>
              {text}
              <Dots aria-hidden="true">{Array.from({ length: dots }, (_, i) => <Dot key={i}>.</Dot>)}</Dots>
            </LineText>
            <LineBox>{box}</LineBox>
            <AmountField>ubform[0].Page1[0].f1</AmountField>
          </IncomeRow>
        ))}
      </div>
    </IncomeGrid>

    <Selection>
      <SignatureBox>
        <SignFlag>Signer ici</SignFlag>
        <SignatureName>Signature4</SignatureName>
      </SignatureBox>
      <Marquee width="552" height="202" fill="none" aria-hidden="true">
        <rect width="552" height="202" stroke="#fff" strokeWidth="2" />
        <rect width="552" height="202" stroke="#ba8cff" strokeWidth="2" strokeDasharray="13 13" />
      </Marquee>
      {handles.map(([x, y]) => <Handle key={x + y} $x={x} $y={y} />)}
    </Selection>
  </Sheet>
);

export default function App() {
  return (
    <>
      <GlobalStyle />
      <Desktop>
        <Window>
          <TitleBar>
            <Brand>
              <BrandLetter $tone="#ffc90e">U</BrandLetter>
              <BrandLetter $tone="#4fd8a0">P</BrandLetter>
              <BrandLetter $tone="#35a3ea">D</BrandLetter>
              <BrandLetter $tone="#ae85ff">F</BrandLetter>
            </Brand>
            <BarDivider />
            <MenuBar>
              <MenuButton>Fichier</MenuButton>
              <MenuButton>Aide<NewsDot /></MenuButton>
            </MenuBar>
            <Tab>
              <CloudOffIcon />
              <span>f1040 (1)*</span>
              <GlyphButton $w={28} aria-label="Fermer l’onglet"><CrossIcon size={18} /></GlyphButton>
            </Tab>
            <NewTab aria-label="Nouvel onglet"><StrokeIcon w={22} h={22} color="#e4e4e4" d="M11 0v22M0 11h22" /></NewTab>
            <WindowTools>
              <CountButton>1<StrokeIcon w={22} h={14} color="#dcdcdc" d="M2 2l9 9 9-9" /></CountButton>
              <Account aria-label="Compte"><Avatar>U</Avatar></Account>
              <BarDivider />
              <WindowButtons>
                <GlyphButton aria-label="Réduire"><StrokeIcon w={28} h={4} color="#dcdcdc" d="M0 2h28" /></GlyphButton>
                <GlyphButton aria-label="Agrandir">
                  <Icon s={20} stroke="#dcdcdc"><rect x="1" y="1" width="18" height="18" rx="2" /></Icon>
                </GlyphButton>
                <GlyphButton aria-label="Fermer"><CrossIcon size={22} /></GlyphButton>
              </WindowButtons>
            </WindowTools>
          </TitleBar>

          <Workspace>
            <Rail $side="left">
              <Notch>
                <svg width="20" height="48" viewBox="0 0 20 48" aria-hidden="true">
                  <path fill="#363636" d="M0 0h8l8 13q6 11 0 22L8 48H0z" />
                  <circle cx="4" cy="24" r="4" fill="#ba8cff" />
                </svg>
              </Notch>
              <RailItems items={leftTools} filled />
              <RailSpacer />
              <RailItems items={leftBottom} />
            </Rail>

            <Main>
              <Toolbar>
                <ToolGroup>
                  {formTools.map(([label, Glyph]) => (
                    <ToolButton key={label} aria-label={label}><Glyph /></ToolButton>
                  ))}
                  <ToolDivider />
                  <ToolButton aria-label="Dupliquer"><CopiesIcon /></ToolButton>
                  <ToolButton aria-label="Disposer"><GridIcon /></ToolButton>
                  <ToolDivider />
                  <ToolButton $w={50} aria-label="Aligner"><AlignIcon /><Caret color="#c3c2c5" /></ToolButton>
                  <ToolButton $w={58} aria-label="Outils"><ToolsIcon /><Caret /></ToolButton>
                </ToolGroup>
                <Preview><Switch type="checkbox" role="switch" />Aperçu</Preview>
              </Toolbar>
              <Canvas>
                <TaxForm />
                <ScrollTrack><ScrollThumb /></ScrollTrack>
              </Canvas>
              <Pager>
                <GlyphButton aria-label="Zoom arrière"><Icon s={32}><circle cx="16" cy="16" r="14" /><path d="M9 16h14" /></Icon></GlyphButton>
                <ZoomLevel>97%<Caret color="#8a898c" size={12} /></ZoomLevel>
                <GlyphButton aria-label="Zoom avant"><Icon s={32}><circle cx="16" cy="16" r="14" /><path d="M9 16h14M16 9v14" /></Icon></GlyphButton>
                <PagerRule />
                <PagerPair>
                  <GlyphButton aria-label="Première page"><StrokeIcon color="#c3c2c5" d="M6 7h20M6 23l10-9 10 9" /></GlyphButton>
                  <GlyphButton aria-label="Page précédente"><StrokeIcon color="#c3c2c5" d="M6 15l10-9 10 9M6 25l10-9 10 9" /></GlyphButton>
                </PagerPair>
                <PageInput aria-label="Page" defaultValue="1   /   2" />
                <PagerPair>
                  <GlyphButton aria-label="Page suivante"><StrokeIcon d="M6 6l10 9 10-9M6 16l10 9 10-9" /></GlyphButton>
                  <GlyphButton aria-label="Dernière page"><StrokeIcon d="M6 9l10 9 10-9M6 24h20" /></GlyphButton>
                </PagerPair>
                <PagerRule />
                <GlyphButton aria-label="Fermer la barre"><CrossIcon size={26} color={ink} /></GlyphButton>
              </Pager>
            </Main>

            <Rail $side="right">
              <RailItems items={rightTools} />
              <RailSpacer />
              <RailItems items={rightBottom} />
            </Rail>
          </Workspace>
        </Window>
      </Desktop>
    </>
  );
}
